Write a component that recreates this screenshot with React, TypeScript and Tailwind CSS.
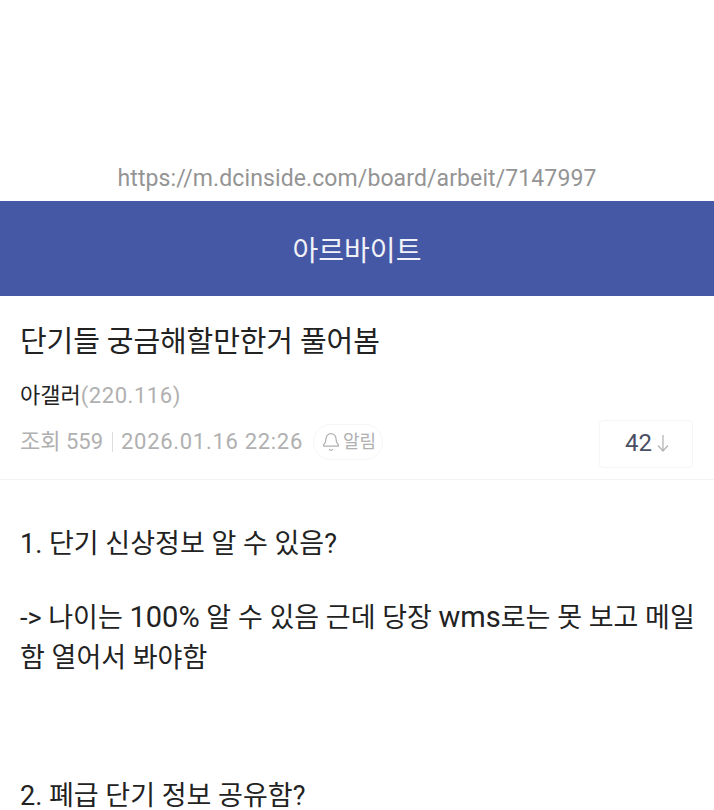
import { Bell } from "lucide-react"

const App = () => {
  return (
    <div className="flex h-[810px] w-[714px] flex-col overflow-hidden bg-white font-['Roboto','Noto_Sans_CJK_KR',sans-serif]">
      <div className="flex h-[201px] shrink-0 items-end justify-center pb-[7px] text-[23px] leading-[30px] tracking-[0.1px] text-[#949494]">
        https://m.dcinside.com/board/arbeit/7147997
      </div>
      <div className="flex h-[95px] shrink-0 items-center justify-center bg-[#4558a5] pt-[6px] text-[28px] text-[#f1f2f8]">아르바이트</div>
      <div className="shrink-0 border-b border-[#f3f3f3] pl-5 pr-[21px]">
        <h1 className="pt-[24px] text-[29px] leading-[44px] tracking-[-0.1px] text-[#222]">단기들 궁금해할만한거 풀어봄</h1>
        <p className="mt-[16px] text-[22px] leading-[32px] text-[#222]">
          아갤러<span className="tracking-[0.55px] text-[#b0b0b0]">(220.116)</span>
        </p>
        <div className="flex items-center pb-[11px] pt-[8px] text-[22px] text-[#b0b0b0]">
          <div className="flex items-center pb-[5px]">
            <span>조회 559</span>
            <span className="ml-[9px] mr-2 h-5 w-px bg-[#ddd]" />
            <span className="tracking-[0.7px]">2026.01.16 22:26</span>
            <span className="ml-[10px] flex h-9 items-center gap-[2px] rounded-full border border-[#f5f5f5] pl-[7px] pr-[6px] text-[18px]">
              <Bell size={20} strokeWidth={1.5} />알림
            </span>
          </div>
          <span className="ml-auto flex h-[48px] w-[94px] items-center justify-center gap-[5px] rounded border border-[#f5f5f5] pb-[2px] pl-[2px] text-[24px] text-[#4a4f63]">
            42
            <svg width="12" height="18" viewBox="0 0 12 18" fill="none" stroke="#b5b5b5" strokeWidth="1.3">
              <path d="M6 1V17M1 11.5L6 17L11 11.5" />
            </svg>
          </span>
        </div>
      </div>
      <div className="pl-5 pt-[44px] text-[27px] leading-[40px] text-[#222]">
        <p>1. 단기 신상정보 알 수 있음?</p>
        <p className="mt-[33px]">
          -&gt; 나이는 <span className="text-[29px]">100%</span> 알 수 있음 근데 당장 <span className="text-[29px]">wms</span>로는 못 보고 메일
          <br />
          함 열어서 봐야함
        </p>
        <p className="mt-[103px] leading-[30px]">2. 폐급 단기 정보 공유함?</p>
      </div>
    </div>
  )
}

export default App
